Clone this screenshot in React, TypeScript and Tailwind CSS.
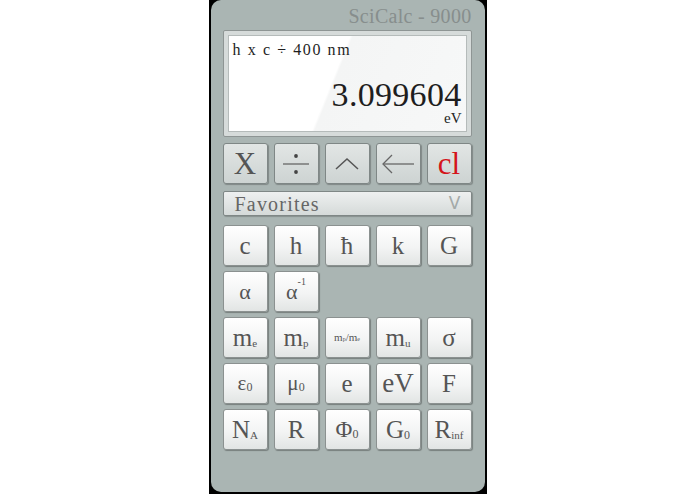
import type { ReactNode } from "react";

const serif = { fontFamily: '"Liberation Serif", "DejaVu Serif", serif' };

function OpKey({ children }: { children: ReactNode }) {
  return (
    <button
      type="button"
      className="flex h-[41px] w-[45px] items-center justify-center rounded-[3px] border border-[#7f8786] bg-[linear-gradient(180deg,#e2e6e5_0%,#cdd3d2_100%)] text-[#555] shadow-[1px_1px_1px_rgba(0,0,0,0.25)]"
    >
      {children}
    </button>
  );
}

function Key({ children, className = "" }: { children?: ReactNode; className?: string }) {
  return (
    <button
      type="button"
      className={`flex h-[41px] w-[45px] items-center justify-center rounded-[3px] border border-[#8b9190] bg-[linear-gradient(180deg,#ffffff_0%,#f3f4f4_55%,#e2e5e4_100%)] text-[#555] shadow-[1px_1px_1px_rgba(0,0,0,0.3)] ${className}`}
      style={serif}
    >
      {children}
    </button>
  );
}

function Sub({ base, sub, baseClass = "text-[25px]", subClass = "text-[11px]" }: { base: string; sub: string; baseClass?: string; subClass?: string }) {
  return (
    <span className="flex items-baseline leading-none">
      <span className={baseClass}>{base}</span>
      <span className={`${subClass} translate-y-[1px]`}>{sub}</span>
    </span>
  );
}

export default function App() {
  return (
    <div className="flex h-[494px] w-[695px] justify-center bg-white">
      <div className="h-[494px] w-[278px] bg-black px-[2px] pb-[2px]">
        <div className="flex h-full flex-col rounded-[10px] bg-[#aab5b3] pl-[12px] pr-[13px]">
          {/* title */}
          <div className="flex h-[30px] items-center justify-end pt-[2px]">
            <span className="text-[20px] leading-none tracking-[0.3px] text-[#878e8d]" style={serif}>
              SciCalc - 9000
            </span>
          </div>

          {/* display */}
          <div className="h-[107px] rounded-[2px] border border-[#8e9594] bg-[#d6dbda] p-[4px]">
            <div className="flex h-full flex-col border border-[#b5bbba] bg-[linear-gradient(112deg,#ffffff_0%,#ffffff_44%,#f4f5f5_45%,#f7f8f8_100%)] px-[4px] pt-[4px] text-[#1e1e1e]" style={serif}>
              <div className="text-[16px] leading-[20px] tracking-[1.6px]">h x c ÷ 400 nm</div>
              <div className="mt-[20px] text-right text-[34px] leading-[30px] tracking-[0.3px]">3.099604</div>
              <div className="mt-[1px] text-right text-[15px] leading-[14px]">eV</div>
            </div>
          </div>

          {/* operators */}
          <div className="mt-[6px] flex gap-[6px]">
            <OpKey>
              <span className="text-[31px] leading-none" style={serif}>X</span>
            </OpKey>
            <OpKey>
              <svg width="28" height="26" viewBox="0 0 28 26">
                <line x1="1" y1="13" x2="27" y2="13" stroke="#666" strokeWidth="1.3" />
                <circle cx="14" cy="5" r="1.9" fill="#444" />
                <circle cx="14" cy="21" r="1.9" fill="#444" />
              </svg>
            </OpKey>
            <OpKey>
              <svg width="26" height="16" viewBox="0 0 26 16">
                <polyline points="2,13 13,3 24,13" fill="none" stroke="#555" strokeWidth="1.5" />
              </svg>
            </OpKey>
            <OpKey>
              <svg width="34" height="22" viewBox="0 0 34 22">
                <line x1="3" y1="11" x2="33" y2="11" stroke="#666" strokeWidth="1.3" />
                <polyline points="11,2 2,11 11,20" fill="none" stroke="#666" strokeWidth="1.3" />
              </svg>
            </OpKey>
            <OpKey>
              <span className="text-[31px] leading-none text-[#d4141a]" style={serif}>cl</span>
            </OpKey>
          </div>

          {/* favorites */}
          <div className="mt-[7px] flex h-[25px] items-center justify-between rounded-[2px] border border-[#7f8786] bg-[linear-gradient(180deg,#eef0f0_0%,#d5dad9_100%)] pl-[11px] pr-[10px] shadow-[1px_1px_1px_rgba(0,0,0,0.2)]">
            <span className="text-[20px] leading-none tracking-[1.2px] text-[#666]" style={serif}>Favorites</span>
            <span className="text-[17px] leading-none text-[#a3a9a8]" style={{ fontFamily: '"DejaVu Sans", sans-serif' }}>V</span>
          </div>

          {/* constants */}
          <div className="mt-[9px] flex flex-col gap-[5px]">
            <div className="flex gap-[6px]">
              <Key><span className="text-[25px] leading-none">c</span></Key>
              <Key><span className="text-[25px] leading-none">h</span></Key>
              <Key><span className="text-[25px] leading-none">ħ</span></Key>
              <Key><span className="text-[25px] leading-none">k</span></Key>
              <Key><span className="text-[25px] leading-none">G</span></Key>
            </div>
            <div className="flex gap-[6px]">
              <Key><span className="text-[22px] leading-none">α</span></Key>
              <Key>
                <span className="flex items-start leading-none">
                  <span className="text-[22px]">α</span>
                  <span className="-mt-[4px] text-[10px]">-1</span>
                </span>
              </Key>
            </div>
            <div className="flex gap-[6px]">
              <Key><Sub base="m" sub="e" /></Key>
              <Key><Sub base="m" sub="p" /></Key>
              <Key>
                <span className="flex items-baseline text-[11px] leading-none">
                  m<span className="text-[6px]">p</span>/m<span className="text-[6px]">e</span>
                </span>
              </Key>
              <Key><Sub base="m" sub="u" /></Key>
              <Key><span className="text-[25px] leading-none">σ</span></Key>
            </div>
            <div className="flex gap-[6px]">
              <Key><Sub base="ε" sub="0" baseClass="text-[21px]" subClass="text-[12px]" /></Key>
              <Key><Sub base="μ" sub="0" baseClass="text-[21px]" subClass="text-[12px]" /></Key>
              <Key><span className="text-[25px] leading-none">e</span></Key>
              <Key><span className="text-[27px] leading-none">eV</span></Key>
              <Key><span className="text-[25px] leading-none">F</span></Key>
            </div>
            <div className="flex gap-[6px]">
              <Key><Sub base="N" sub="A" baseClass="text-[25px]" subClass="text-[11px]" /></Key>
              <Key><span className="text-[25px] leading-none">R</span></Key>
              <Key><Sub base="Φ" sub="0" baseClass="text-[23px]" subClass="text-[12px]" /></Key>
              <Key><Sub base="G" sub="0" baseClass="text-[25px]" subClass="text-[12px]" /></Key>
              <Key><Sub base="R" sub="inf" baseClass="text-[25px]" subClass="text-[11px]" /></Key>
            </div>
          </div>
        </div>
      </div>
    </div>
  );
}
